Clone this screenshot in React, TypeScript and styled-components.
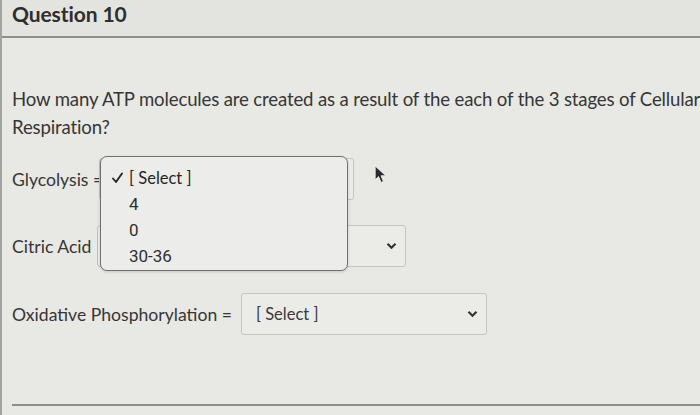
import React from "react";
import styled, { createGlobalStyle } from "styled-components";

const GlobalStyle = createGlobalStyle`
  html, body {
    margin: 0;
    padding: 0;
    background: #e8e8e5;
    overflow: hidden;
  }
  body {
    font-family: Lato, "Open Sans", sans-serif;
    color: #363636;
  }
`;

const Page = styled.div`
  width: 720px;
  height: 415px;
  border-left: 2px solid #a3a3a0;
  box-sizing: border-box;
  display: flex;
  flex-direction: column;
`;

const Header = styled.div`
  height: 38px;
  background: #e3e3df;
  border-bottom: 2px solid #8e8e8b;
  padding: 1px 0 0 10px;
  box-sizing: border-box;
  display: flex;
  align-items: flex-start;
  font-size: 21px;
  font-weight: 700;
  color: #2e2e2e;
  letter-spacing: -0.1px;
`;

const Body = styled.div`
  flex: 1;
  padding: 47px 0 0 10px;
  display: flex;
  flex-direction: column;
`;

const QuestionText = styled.p`
  margin: 0;
  font-size: 18.6px;
  line-height: 28px;
  width: 705px;
  letter-spacing: -0.15px;
`;

const Row = styled.div<{ $top: number }>`
  display: flex;
  align-items: center;
  margin-top: ${(p) => p.$top}px;
  font-size: 17.6px;
  position: relative;
`;

const Label = styled.span`
  white-space: nowrap;
`;

const SelectBox = styled.div<{ $width: number; $left: number }>`
  width: ${(p) => p.$width}px;
  height: 42px;
  margin-left: ${(p) => p.$left}px;
  box-sizing: border-box;
  border: 1px solid #c4c4c0;
  border-radius: 3px;
  background: #ebebe8;
  display: flex;
  align-items: center;
  justify-content: space-between;
  padding: 0 8px 0 14px;
  font-size: 16.5px;
  color: #3a3a3a;
`;

const Chevron = () => (
  <svg width="11" height="8" viewBox="0 0 11 8">
    <path d="M1.5 1.8 L5.5 5.8 L9.5 1.8" fill="none" stroke="#333" strokeWidth="2.2" />
  </svg>
);

const Popup = styled.div`
  position: absolute;
  z-index: 2;
  left: 88px;
  top: -2px;
  width: 248px;
  height: 115px;
  box-sizing: border-box;
  border: 1.5px solid #707070;
  border-radius: 7px;
  background: #ececea;
  padding: 8px 0 0 10px;
  display: flex;
  flex-direction: column;
  box-shadow: 0 1px 3px rgba(0, 0, 0, 0.15);
`;

const Option = styled.div<{ $selected?: boolean }>`
  height: 26px;
  display: flex;
  align-items: center;
  font-size: ${(p) => (p.$selected ? 16.5 : 17)}px;
  color: ${(p) => (p.$selected ? "#262626" : "#303030")};
  font-family: ${(p) => (p.$selected ? "Lato" : "Roboto")}, sans-serif;
`;

const CheckIcon = () => (
  <svg width="18" height="12" viewBox="0 0 18 12">
    <path d="M2 6.5 L5 10 L11 1.5" fill="none" stroke="#262626" strokeWidth="1.9" strokeLinecap="round" strokeLinejoin="round" />
  </svg>
);

const Indent = styled.span`
  width: 18px;
`;

const Cursor = styled.svg`
  position: absolute;
  z-index: 3;
  left: 362px;
  top: 7px;
`;

const Footer = styled.div`
  margin-top: auto;
  height: 9px;
  border-top: 2px solid #8e8e8b;
`;

export default function App() {
  return (
    <>
      <GlobalStyle />
      <Page>
        <Header>Question 10</Header>
        <Body>
          <QuestionText>
            How many ATP molecules are created as a result of the each of the 3 stages of Cellular Respiration?
          </QuestionText>
          <Row $top={17}>
            <Label>Glycolysis =</Label>
            <SelectBox $width={255} $left={-4}>
              <span />
              <Chevron />
            </SelectBox>
            <Popup>
              <Option $selected>
                <CheckIcon />[ Select ]
              </Option>
              <Option>
                <Indent />4
              </Option>
              <Option>
                <Indent />0
              </Option>
              <Option>
                <Indent />30-36
              </Option>
            </Popup>
            <Cursor width="14" height="19" viewBox="0 0 13 18">
              <path d="M1 1 L1 14 L4.2 11 L6.6 16.5 L8.8 15.5 L6.5 10.2 L11 10.2 Z" fill="#2a2a2a" stroke="#eee" strokeWidth="0.8" />
            </Cursor>
          </Row>
          <Row $top={25}>
            <Label>Citric Acid</Label>
            <SelectBox $width={309} $left={6}>
              <span />
              <Chevron />
            </SelectBox>
          </Row>
          <Row $top={26}>
            <Label>Oxidative Phosphorylation =</Label>
            <SelectBox $width={246} $left={9}>
              <span>[ Select ]</span>
              <Chevron />
            </SelectBox>
          </Row>
          <Footer />
        </Body>
      </Page>
    </>
  );
}
